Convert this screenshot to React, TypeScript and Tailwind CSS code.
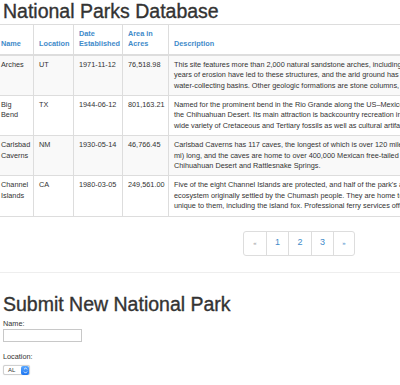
import { ChevronDown, ChevronUp } from "lucide-react";

type Park = {
  name: string[];
  location: string;
  date: string;
  area: string;
  lines: string[];
};

const parks: Park[] = [
  {
    name: ["Arches"],
    location: "UT",
    date: "1971-11-12",
    area: "76,518.98",
    lines: [
      "This site features more than 2,000 natural sandstone arches, including the famous Delicate Arch. In a desert climate millions of",
      "years of erosion have led to these structures, and the arid ground has life-sustaining soil crust and potholes, natural",
      "water-collecting basins. Other geologic formations are stone columns, spires, fins, and towers.",
    ],
  },
  {
    name: ["Big", "Bend"],
    location: "TX",
    date: "1944-06-12",
    area: "801,163.21",
    lines: [
      "Named for the prominent bend in the Rio Grande along the US–Mexico border, this park encompasses a large and remote part of",
      "the Chihuahuan Desert. Its main attraction is backcountry recreation in the arid Chisos Mountains and in canyons along the river. A",
      "wide variety of Cretaceous and Tertiary fossils as well as cultural artifacts of Native Americans also exist within its borders.",
    ],
  },
  {
    name: ["Carlsbad", "Caverns"],
    location: "NM",
    date: "1930-05-14",
    area: "46,766.45",
    lines: [
      "Carlsbad Caverns has 117 caves, the longest of which is over 120 miles (190",
      "mi) long, and the caves are home to over 400,000 Mexican free-tailed bats and sixteen other species. Above ground are the",
      "Chihuahuan Desert and Rattlesnake Springs.",
    ],
  },
  {
    name: ["Channel", "Islands"],
    location: "CA",
    date: "1980-03-05",
    area: "249,561.00",
    lines: [
      "Five of the eight Channel Islands are protected, and half of the park's area is underwater. The islands have a unique Mediterranean",
      "ecosystem originally settled by the Chumash people. They are home to over 2,000 species of land plants and animals, and 145 are",
      "unique to them, including the island fox. Professional ferry services offer transportation to the islands from the mainland.",
    ],
  },
];

const cell = "border border-[#dddddd] px-[5px] py-[4px] align-top";
const head = "border border-[#dddddd] border-b-2 px-[5px] py-[4px] align-bottom text-left font-bold text-[#428bca]";

export default function App() {
  return (
    <div className="w-[400px] h-[385px] overflow-hidden bg-white text-[#333333] font-['Liberation_Sans',Arial,sans-serif]">
      <div className="w-[608px] -ml-[5px]">
        <h1 className="pl-[8px] pt-[1.5px] text-[19.5px] leading-none font-medium [-webkit-text-stroke:0.35px_#333333]">
          National Parks Database
        </h1>

        <table className="mt-[3px] w-[613px] table-fixed border-collapse text-[7.3px] leading-[10.4px]">
          <colgroup>
            <col className="w-[38px]" />
            <col className="w-[40px]" />
            <col className="w-[49px]" />
            <col className="w-[46px]" />
            <col className="w-[440px]" />
          </colgroup>
          <thead>
            <tr>
              <th className={head}>Name</th>
              <th className={head}>Location</th>
              <th className={head}>
                Date
                <br />
                Established
              </th>
              <th className={head}>
                Area in
                <br />
                Acres
              </th>
              <th className={head}>Description</th>
            </tr>
          </thead>
          <tbody>
            {parks.map((p, i) => (
              <tr key={p.date} className={i % 2 === 0 ? "bg-[#f9f9f9]" : "bg-white"}>
                <td className={cell}>
                  {p.name.map((n) => (
                    <div key={n}>{n}</div>
                  ))}
                </td>
                <td className={cell}>{p.location}</td>
                <td className={cell}>{p.date}</td>
                <td className={cell}>{p.area}</td>
                <td className={cell + " whitespace-nowrap overflow-hidden"}>
                  {p.lines.map((l) => (
                    <div key={l}>{l}</div>
                  ))}
                </td>
              </tr>
            ))}
          </tbody>
        </table>

        <div className="flex justify-center pt-[14px]">
          <div className="flex h-[25px] rounded-[3px] border border-[#dddddd] text-[#428bca] text-[9px]">
            <span className="w-[22px] flex items-center justify-center text-[6px] text-[#999999]">«</span>
            <span className="w-[22px] flex items-center justify-center border-l border-[#dddddd]">1</span>
            <span className="w-[23px] flex items-center justify-center border-l border-[#dddddd]">2</span>
            <span className="w-[22px] flex items-center justify-center border-l border-[#dddddd]">3</span>
            <span className="w-[21px] flex items-center justify-center border-l border-[#dddddd] text-[6px]">»</span>
          </div>
        </div>

        <hr className="mt-[16px] border-t border-[#eeeeee]" />

        <h2 className="pl-[8px] mt-[22px] text-[19.5px] leading-none font-medium [-webkit-text-stroke:0.35px_#333333]">
          Submit New National Park
        </h2>

        <div className="pl-[8px] pt-[5px] text-[7.3px] leading-[10px]">
          <div>Name:</div>
          <div className="mt-[0px] w-[79px] h-[13px] border border-[#c8c8c8] bg-white" />
          <div className="mt-[10px]">Location:</div>
          <div className="mt-[3px] flex items-center w-[27px] h-[10px] rounded-[2px] border border-[#d0d0d0] bg-white shadow-[0_0_1px_rgba(0,0,0,0.2)]">
            <span className="pl-[4px] flex-1 text-[6px] leading-none">AL</span>
            <span className="w-[8px] h-[9px] rounded-[2px] bg-gradient-to-b from-[#5aa8ff] to-[#1a74f0] flex flex-col items-center justify-center text-white">
              <ChevronUp size={5} strokeWidth={4} className="-mb-[1px]" />
              <ChevronDown size={5} strokeWidth={4} />
            </span>
          </div>
        </div>
      </div>
    </div>
  );
}
